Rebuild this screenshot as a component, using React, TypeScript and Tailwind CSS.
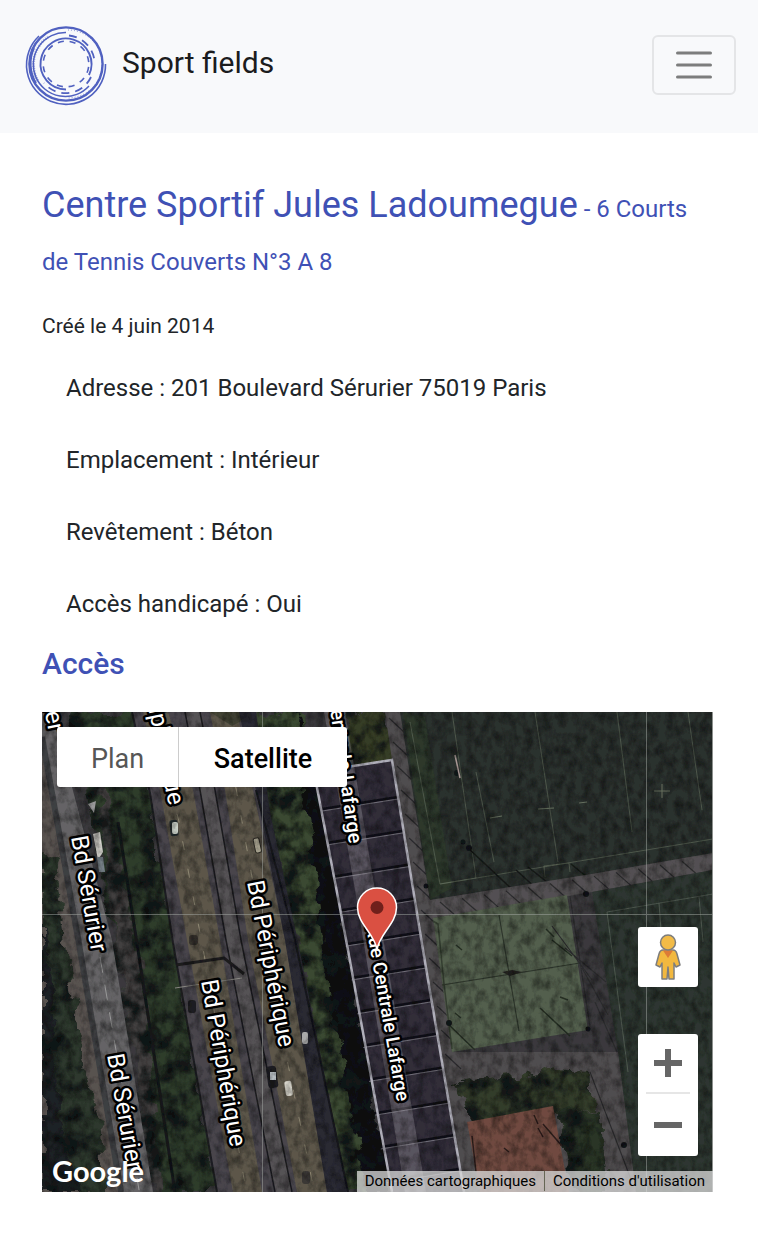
import React from "react";

type Label = { text: string; x: number; y: number; angle: number; size?: number; anchor?: "start" | "end" };

const labels: Label[] = [
  { text: "Bd Sérurier", x: 29, y: 125, angle: 80 },
  { text: "Bd Sérurier", x: 65, y: 343, angle: 80 },
  { text: "Bd Sérurier", x: 7, y: 21, angle: 78, anchor: "end" },
  { text: "Bd Périphérique", x: 159, y: 269, angle: 80 },
  { text: "Bd Périphérique", x: 205, y: 170, angle: 79 },
  { text: "Bd Périphérique", x: 127, y: 94, angle: 78, anchor: "end" },
  { text: "Rue Centrale Lafarge", x: 355, y: 390, angle: 80, size: 19, anchor: "end" },
  { text: "Rue Centrale Lafarge", x: 307, y: 132, angle: 82, size: 20, anchor: "end" },
];

const details = ["Adresse : 201 Boulevard Sérurier 75019 Paris", "Emplacement : Intérieur", "Revêtement : Béton", "Accès handicapé : Oui"];

const roofLines = Array.from({ length: 13 }, (_, i) => {
  const y = 85 + i * 33.8;
  return { x1: 276 + (y - 60) * 0.173, y1: y + 12, x2: 350 + (y - 48) * 0.167, y2: y };
});

const fenceShadows = Array.from({ length: 15 }, (_, i) => {
  const y = 6 + i * 24;
  return { x: 343 + y * 0.167, y };
});

const pathShadows = Array.from({ length: 12 }, (_, i) => ({ x: 398 + i * 22, y: 187 - i * 3.7 }));

function Logo() {
  return (
    <svg viewBox="0 0 84 84" className="size-21 shrink-0" fill="none" stroke="#5061c0" aria-hidden="true">
      <path d="M15 13A39.5 39.5 0 1 0 81.5 41" strokeWidth="1.6" />
      <path d="M10 25A37 37 0 0 0 12 60" strokeWidth="2" />
      <circle cx="42" cy="41" r="36.6" strokeWidth="2.4" />
      <path d="M44 7A34 34 0 0 1 44 75" strokeWidth="1" strokeDasharray="1 2" opacity=".7" />
      <path d="M42 9.5A32 32 0 1 0 65 63" strokeWidth="1.5" />
      <path d="M24 14A33 33 0 0 0 14 58" strokeWidth="3" strokeDasharray="0.8 1.6" opacity=".5" />
      <path d="M45 12.5A28.7 28.7 0 0 1 70.500 38" strokeWidth="1.8" strokeDasharray="8 6" />
      <path d="M42 66.500A25.500 25.500 0 1 1 65 52" strokeWidth="1.9" />
      <circle cx="42" cy="41" r="22.8" strokeWidth="1.6" strokeDasharray="6 5.940" strokeDashoffset="-3" />
      <path d="M67 54A28 28 0 0 1 20 60" strokeWidth="1.8" strokeDasharray="8 6" />
    </svg>
  );
}

function SatelliteImage() {
  return (
    <svg viewBox="0 0 671 480" preserveAspectRatio="xMidYMid slice" className="block h-full w-full" role="img" aria-label="Vue satellite">
      <defs>
        <filter id="foliage" x="-5%" y="-5%" width="110%" height="110%" colorInterpolationFilters="sRGB">
          <feTurbulence type="fractalNoise" baseFrequency="0.05" numOctaves="4" seed="8" result="n" />
          <feDisplacementMap in="SourceGraphic" in2="n" scale="22" xChannelSelector="R" yChannelSelector="G" result="d" />
          <feColorMatrix in="n" type="matrix" values="0 0 0 0 0.07  0 0 0 0 0.09  0 0 0 0 0.09  3.4 0 0 0 -1.4" result="dark" />
          <feComposite in="dark" in2="d" operator="in" result="shade" />
          <feMerge>
            <feMergeNode in="d" />
            <feMergeNode in="shade" />
          </feMerge>
        </filter>
        <filter id="grain" x="0" y="0" width="100%" height="100%" colorInterpolationFilters="sRGB">
          <feTurbulence type="fractalNoise" baseFrequency="0.12 0.09" numOctaves="4" seed="3" />
          <feColorMatrix type="matrix" values="0 0 0 0 0  0 0 0 0 0  0 0 0 0 0  0.9 0 0 0 -0.34" />
        </filter>
        <filter id="soft">
          <feGaussianBlur stdDeviation="0.5" />
        </filter>
      </defs>
      <g filter="url(#soft)">
        <rect width="671" height="480" fill="#3a393c" />

        <path d="M0 20L37 238L78 480H0Z" fill="#595350" />
        <g filter="url(#foliage)">
          <path d="M0 140L12 150L18 190L26 250L34 300L43 360L58 410L64 480H0Z" fill="#2d382d" />
          <path d="M28 0H92L108 81L131 231L175 480H112L72 228L46 80Z" fill="#2f3d2c" />
          <path d="M50 20L66 90L100 270L120 480H112L72 228Z" fill="#434040" />
          <path d="M207 0H262L276 60L306 238L350 480H300L253 228L222 78Z" fill="#3b4a32" />
        </g>
        <path d="M0 210L8 260L12 320L16 400L38 480H0Z" fill="#1a1b24" opacity=".75" filter="url(#foliage)" />
        <path d="M0 0H10L34 90L70 228L111 480H81L38 228L0 30Z" fill="#656466" />
        <path d="M0 25L37 232L79 480" fill="none" stroke="#3e3f42" strokeWidth="6" />
        <path d="M58 245L76 350L97 478" fill="none" stroke="#999" strokeWidth="1" strokeDasharray="16 12" />
        <path d="M76 110L96 238L133 480" fill="none" stroke="#14171a" strokeWidth="3" />

        <path d="M90 0H198L214 78L243 228L285 480H175L131 231L108 81Z" fill="#48454c" />
        <path d="M90 0L108 81L131 231L175 480" fill="none" stroke="#1c1d20" strokeWidth="2" />
        <path d="M101 0H126L151 78L178 228L220 480H191L145 228L118 78Z" fill="#5d574a" />
        <path d="M168 0H195L211 78L243 228L285 480H255L206 228L183 78Z" fill="#5d574a" />
        <path d="M143 0H158L173 78L199 228L250 480H233L184 228L158 78Z" fill="#555255" />
        <path d="M143 0L158 78L184 228L233 480M158 0L173 78L199 228L250 480" fill="none" stroke="#1b1b1f" strokeWidth="1.5" />
        <path d="M168 0L190 14L216 0Z" fill="#444536" />
        <path d="M116 20L137 110L162 242L204 478M184 20L200 110L229 270L272 478" fill="none" stroke="#aaa38a" strokeWidth="1" strokeDasharray="9 19" opacity=".65" />
        <path d="M197 0L214 78L243 228L285 480H306L258 240L228 100L214 0Z" fill="#292932" />
        <path d="M214 78L253 228L306 480" fill="none" stroke="#15161c" strokeWidth="2" />
        <path d="M134 253L182 246L202 262" fill="none" stroke="#1e1d1f" strokeWidth="3" />
        <path d="M133 276L200 266" stroke="#8b8984" strokeWidth="1" />

        <g>
          <rect x="128" y="108" width="8" height="16" rx="2" transform="rotate(-6 132 116)" fill="#222b2c" />
          <rect x="130" y="110" width="6" height="12" rx="2" fill="#c9d0c7" />
          <rect x="212" y="126" width="6" height="15" rx="2" transform="rotate(-12 215 132)" fill="#a7a28f" stroke="#2b2923" />
          <rect x="225" y="354" width="10" height="22" rx="3" transform="rotate(-8 230 364)" fill="#1c1c20" />
          <rect x="228" y="360" width="6" height="8" fill="#c4cbd0" />
          <rect x="243" y="369" width="7" height="15" rx="2" transform="rotate(-8 246 376)" fill="#d6d4ca" />
          <rect x="260" y="320" width="6" height="12" rx="2" fill="#aaa" />
          <rect x="260" y="459" width="8" height="13" rx="3" fill="#3a3735" />
          <rect x="147" y="223" width="9" height="10" rx="3" fill="#38342f" />
          <rect x="146" y="288" width="8" height="13" rx="3" fill="#1e1e22" />
          <path d="M51 122L58 120L61 140L56 148Z" fill="#d4d2cc" />
          <path d="M55 145L61 145L63 160H57Z" fill="#768087" />
          <path d="M46 92L54 89L52 101Z" fill="#999" />
        </g>

        <path d="M256 0L276 60L306 238L350 480H324L284 260L268 130L252 30Z" fill="#0d0e12" filter="url(#foliage)" />
        <path d="M305 0H345L350 48L305 55Z" fill="#353c25" filter="url(#foliage)" />

        <path d="M343 0H360L392 205L410 340H671V480H422L381 238L350 48Z" fill="#504d4f" />
        <path d="M272 60L350 48L381 238L422 480H350L306 238Z" fill="#312d39" />
        {roofLines.map((l, i) => (
          <g key={i}>
            <path d={`M${l.x1} ${l.y1}L${l.x2} ${l.y2}`} stroke="#100f16" strokeWidth="2.5" />
            <path d={`M${l.x1} ${l.y1 + 2}L${l.x2} ${l.y2 + 2}`} stroke="#716f79" strokeWidth="1" />
          </g>
        ))}
        <path d="M282 0H303L333 178L384 480H363L313 178Z" fill="#a09ca4" opacity=".36" />
        <path d="M350 480L306 238L272 60L350 48L381 238L422 480" fill="none" stroke="#b0afba" strokeWidth="2.5" />
        {fenceShadows.map((s, i) => (
          <path key={i} d={`M${s.x + 3} ${s.y}l16 15`} stroke="#2a2a2d" strokeWidth="1.2" />
        ))}

        <path d="M358 0H671V141L550 162L388 188Z" fill="#2a302d" />
        <path d="M361 0L383 5L410 176L388 188Z" fill="#2d382c" />
        <path d="M368 10L398 172L434 166L410 0M434 60L452 150M493 0L508 98L516 150M575 0L590 120M646 0L660 98M398 172L671 127M503 165L502 154L527 151L528 160" fill="none" stroke="#66715f" strokeWidth="1" opacity=".6" />
        <path d="M496 97L512 96M537 91L545 90M448 106L460 104M612 79H628M620 72V86" stroke="#66715f" strokeWidth="1" />
        <path d="M427 137L474 181M474 158L506 187M486 155L510 174M529 152L545 165" stroke="#151a16" strokeWidth="1.5" />
        <path d="M388 188L550 162L671 141V158L550 180L391 206Z" fill="#535052" />
        {pathShadows.map((s, i) => (
          <path key={i} d={`M${s.x} ${s.y + 3}l16 14`} stroke="#2c2c2e" strokeWidth="1.2" />
        ))}
        <path d="M391 206L525 183L546 318L410 340Z" fill="#535f4d" />
        <path d="M400 273L538 251M457 203L477 319" stroke="#2e362c" strokeWidth="1.2" />
        <path d="M460 260L470 258L480 260L468 264Z" fill="#23221f" />
        <path d="M391 209L396 212L402 272L410 337" fill="none" stroke="#343e30" strokeWidth="1.5" />
        <path d="M504 217L512 225M510 228L530 244M414 233L420 238M413 301L419 306M405 311L433 338M498 296L528 324M518 285L526 288" stroke="#252e23" strokeWidth="1.500" />
        <path d="M528 184L548 315M510 214L550 268M540 256L566 303M523 236L564 270M553 290L575 340M548 360L590 470" fill="none" stroke="#2c2c2e" strokeWidth="1.2" />
        <path d="M550 180L671 158V480H594L576 340Z" fill="#2d3630" />
        <path d="M565 200L671 182M565 200L586 360M617 191L622 260M657 185L661 230" fill="none" stroke="#667165" strokeWidth="1" opacity=".6" />
        <g filter="url(#foliage)">
          <path d="M412 372L458 364L510 358L548 360L550 398L518 400L436 416Z" fill="#333c2a" />
          <path d="M516 398L558 400L566 480H532Z" fill="#2a3526" />
        </g>
        <path d="M425 410L511 394L527 480H438Z" fill="#704a40" />
        <path d="M492 403L496 412M496 416L501 425M501 412L520 434M462 436L467 440M430 424L434 460" stroke="#2b1d1b" strokeWidth="1.5" />
        <g fill="#111416">
          <circle cx="415" cy="61" r="3" />
          <circle cx="427" cy="136" r="3" />
          <circle cx="421" cy="130" r="2.5" />
          <circle cx="384" cy="174" r="2.5" />
          <circle cx="544" cy="182" r="3" />
          <circle cx="546" cy="317" r="2.5" />
          <circle cx="407" cy="311" r="3" />
          <circle cx="582" cy="433" r="3" />
        </g>
        <path d="M413 43L418 66" stroke="#a99995" strokeWidth="1.5" />
        <rect width="671" height="480" filter="url(#grain)" />
      </g>
      <path d="M220.500 0V480M604.500 0V480M0 202.500H671" stroke="#a5aaa5" strokeWidth="1" opacity=".5" />
      <path d="M670.500 0V480" stroke="#8d918e" />

      {labels.map((l, i) => (
        <text
          key={i}
          transform={`translate(${l.x} ${l.y}) rotate(${l.angle})`}
          fontSize={l.size ?? 24}
          fontFamily="Roboto, sans-serif"
          fontWeight={l.size ? 500 : 400}
          textAnchor={l.anchor ?? "start"}
          fill="#fff"
          stroke="#000"
          strokeWidth="5"
          strokeLinejoin="round"
          paintOrder="stroke"
        >
          {l.text}
        </text>
      ))}
      <path d="M335 238C333 222 315.500 212 315.500 195.500A19.500 19.500 0 0 1 354.500 195.500C354.500 212 337 222 335 238Z" fill="#da5042" stroke="#fff" strokeWidth="1.5" />
      <circle cx="335" cy="195.500" r="6.500" fill="#70201b" />
    </svg>
  );
}

function Pegman() {
  return (
    <svg viewBox="0 0 28 48" className="h-12 w-7" stroke="#7d7d7d" strokeWidth="1.5" strokeLinejoin="round" aria-hidden="true">
      <path d="M9 17H19Q22 17 23 21L26 32L22 34L20 30V46H15L14 34L13 46H8V30L6 34L2 32L5 21Q6 17 9 17Z" fill="#f2b83f" />
      <path d="M9 17.500H19L14 25Z" fill="#dd7b36" stroke="none" />
      <circle cx="14" cy="9.500" r="7.500" fill="#f2bb47" />
    </svg>
  );
}

export default function App() {
  return (
    <div className="bg-white font-['Roboto',sans-serif] text-[#212529]">
      <header className="flex h-[133px] items-center justify-between bg-[#f8f9fb] pr-[22px] pb-1 pl-6">
        <a href="#" className="flex items-center gap-[14px] text-3xl text-[#1b1c1e]">
          <Logo />
          <span className="pb-1">Sport fields</span>
        </a>
        <button type="button" aria-label="Menu" className="flex h-15 w-[84px] items-center justify-center rounded-md border-2 border-[#e4e5e7]">
          <svg viewBox="0 0 36 28" className="h-7 w-9" stroke="#7c7d7d" strokeWidth="3" strokeLinecap="round" aria-hidden="true">
            <path d="M1.500 2H34.500M1.500 14H34.500M1.500 26H34.500" />
          </svg>
        </button>
      </header>

      <main className="pt-[46px] pr-[45px] pb-17 pl-[42px]">
        <h1 className="text-4xl leading-[53px] text-[#3f51b5]">
          Centre Sportif Jules Ladoumegue<span className="text-2xl leading-none"> - 6 Courts de Tennis Couverts N°3 A 8</span>
        </h1>
        <p className="mt-[25px] text-[21px] leading-8">Créé le 4 juin 2014</p>
        <ul className="mt-[10px] px-6 text-2xl leading-[72px]">
          {details.map((d) => (
            <li key={d}>{d}</li>
          ))}
        </ul>
        <h2 className="text-3xl leading-[48px] font-medium text-[#3f51b5]">Accès</h2>

        <section aria-label="Carte" className="relative mt-6 h-[480px] overflow-hidden">
          <SatelliteImage />
          <div className="absolute top-[15px] left-[15px] flex h-15 overflow-hidden rounded-[3px] bg-white text-[27px]">
            <button type="button" className="w-[122px] border-r border-[#ccc] pt-1 text-[#565656]">Plan</button>
            <button type="button" className="w-42 pt-1 font-medium text-black">Satellite</button>
          </div>
          <button type="button" aria-label="Street View" className="absolute right-[15px] bottom-[205px] flex size-15 items-center justify-center rounded-[3px] bg-white">
            <Pegman />
          </button>
          <div className="absolute right-[15px] bottom-9 flex w-15 flex-col rounded-[3px] bg-white px-2">
            <button type="button" aria-label="Zoom avant" className="flex h-15 items-center justify-center border-b-2 border-[#e6e6e6]">
              <svg viewBox="0 0 28 28" className="size-7" stroke="#666" strokeWidth="6" aria-hidden="true">
                <path d="M0 14H28M14 0V28" />
              </svg>
            </button>
            <button type="button" aria-label="Zoom arrière" className="flex h-[62px] items-center justify-center">
              <svg viewBox="0 0 28 28" className="size-7" stroke="#666" strokeWidth="6" aria-hidden="true">
                <path d="M0 14H28" />
              </svg>
            </button>
          </div>
          <div className="absolute bottom-[3px] left-[10px] font-['Lato',sans-serif] text-[29px] leading-9 font-bold text-white">Google</div>
          <div className="absolute right-0 bottom-0 flex h-[21px] items-center bg-[#dcdcdc]/75 pb-px text-[15px] leading-5 text-black">
            <a href="#" className="border-r border-[#665] px-2">Données cartographiques</a>
            <a href="#" className="px-2">Conditions d'utilisation</a>
          </div>
        </section>
      </main>
    </div>
  );
}
